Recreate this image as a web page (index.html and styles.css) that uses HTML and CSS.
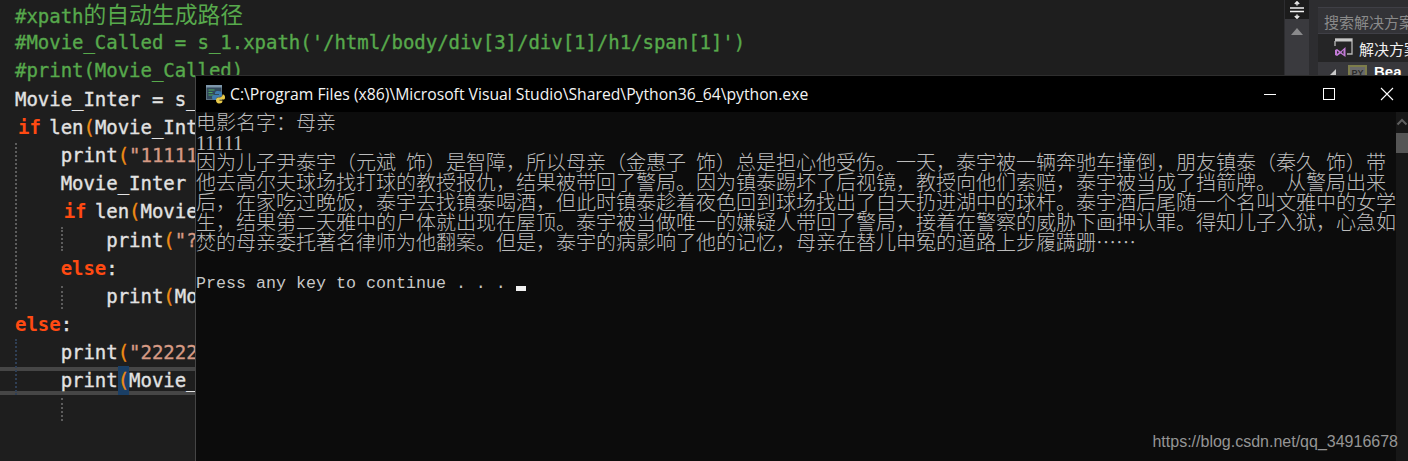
FILE: index.html
```html
<!DOCTYPE html>
<html lang="zh-CN">
<head>
<meta charset="utf-8">
<title>python.exe</title>
<link rel="stylesheet" href="styles.css">
</head>
<body>
<div class="desk">
  <main class="editor">
    <div class="code">
      <div class="ln c">#xpath<span class="zh">的自动生成路径</span></div>
      <div class="ln c">#Movie_Called = s_1.xpath('/html/body/div[3]/div[1]/h1/span[1]')</div>
      <div class="ln c">#print(Movie_Called)</div>
      <div class="ln">Movie_Inter = s_1</div>
      <div class="ln"><span class="k nudge">if</span> len<span class="p">(</span>Movie_Inter</div>
      <div class="ln">    print<span class="p">(</span><span class="s">"11111"</span><span class="p">)</span></div>
      <div class="ln">    Movie_Inter = s_1</div>
      <div class="ln">    <span class="k nudge">if</span> len<span class="p">(</span>Movie_Inter</div>
      <div class="ln">        print<span class="p">(</span><span class="s">"?"</span><span class="p">)</span></div>
      <div class="ln">    <span class="k">else</span>:</div>
      <div class="ln">        print<span class="p">(</span>Movie_Inter</div>
      <div class="ln"><span class="k">else</span>:</div>
      <div class="ln">    print<span class="p">(</span><span class="s">"22222"</span><span class="p">)</span></div>
      <div class="ln">    print<span class="p brace">(</span>Movie_Inter</div>
    </div>
    <div class="curline"></div>
    <i class="guide g1"></i>
    <i class="guide g2"></i>
    <i class="guide g3"></i>
    <i class="guide g4"></i>
    <i class="guide g5"></i>
  </main>

  <aside class="vscroll">
    <div class="splitter">
      <svg width="16" height="18" viewBox="0 0 16 18"><path d="M8 1v3.500M8 13.500V17M5.800 3 8 .8 10.200 3M5.800 15 8 17.200 10.200 15" fill="none" stroke="#e8e8e8" stroke-width="1.500"/><path d="M1 7h14M1 10.500h14" stroke="#f2f2f2" stroke-width="1.600"/></svg>
    </div>
    <svg class="uparrow" width="12" height="7" viewBox="0 0 12 7"><path d="M6 0l6 7H0z" fill="#8a8a8c"/></svg>
  </aside>

  <aside class="explorer">
    <div class="search">搜索解决方案资源管理器</div>
    <div class="row sel">
      <svg class="slnicon" width="20" height="20" viewBox="0 0 20 20"><path d="M1 1h17v15h-5" fill="none" stroke="#b8b8b8" stroke-width="1.300"/><path d="M1 1h17v2.500H1z" fill="#c8c8c8"/><path d="M1 3v5" stroke="#b8b8b8" stroke-width="1.300"/><path d="M11.500 9v10L6.500 15.500 3 18l-2-1v-5l2-1 3.500 2.500z" fill="#c27ad6"/><path d="M3 12.700v3.200l2-1.600zM9.500 12l-2 2.300 2 2.300z" fill="#2d2d30"/></svg>
      <span class="rowtext">解决方案</span>
    </div>
    <div class="row proj">
      <svg class="tri" width="7" height="7" viewBox="0 0 7 7"><path d="M7 0v7H0z" fill="#c8c8c8"/></svg>
      <div class="py">PY</div>
      <span class="bold">Bea</span>
    </div>
  </aside>

  <section class="console">
    <header class="titlebar">
      <svg class="appicon" width="19" height="19" viewBox="0 0 19 19"><rect x="0.500" y="0.500" width="15" height="14" fill="#33495c" stroke="#5b7080"/><path d="M0 0h16v2.500H0z" fill="#7d97ab"/><path d="M2.500 5h6M2.500 7.500h4M2.500 10h5" stroke="#4fae5f" stroke-width="1.200"/><path d="M12 6c-3 0-3 1.500-3 3h4v1H8c-1.500 0-2 1-2 2.500S7 15 8.500 15H10c0-2 1-3 3-3s3-1 3-3-1-3-4-3z" fill="#3f7cb0"/><path d="M13 18.500c3 0 3.500-1 3.500-3h-3v-1H18c1-.5 1-1.500 1-2.500s-.5-2.500-2-2.500h-.5c0 2-1 3-3 3S10 13 10 15s1 3.500 3 3.500z" fill="#e8c94a"/></svg>
      <span class="title">C:\Program Files (x86)\Microsoft Visual Studio\Shared\Python36_64\python.exe</span>
      <div class="winbtns">
        <svg width="14" height="14" viewBox="0 0 14 14"><path d="M1 7.500h12" stroke="#fff"/></svg>
        <svg width="14" height="14" viewBox="0 0 14 14"><rect x="1.500" y="1.500" width="11" height="11" fill="none" stroke="#fff"/></svg>
        <svg width="14" height="14" viewBox="0 0 14 14"><path d="M1 1l12 12M13 1L1 13" stroke="#fff" stroke-width="1.100"/></svg>
      </div>
    </header>
    <div class="conbody">
      <div class="output">
        <div class="out">电影名字：母亲</div>
        <div class="out num">11111</div>
        <div class="out">因为儿子尹泰宇（元斌<span class="lat"> </span>饰）是智障，所以母亲（金惠子<span class="lat"> </span>饰）总是担心他受伤。一天，泰宇被一辆奔驰车撞倒，朋友镇泰（秦久<span class="lat"> </span>饰）带</div>
        <div class="out">他去高尔夫球场找打球的教授报仇，结果被带回了警局。因为镇泰踢坏了后视镜，教授向他们索赔，泰宇被当成了挡箭牌。<span class="lat"> </span>从警局出来</div>
        <div class="out">后，在家吃过晚饭，泰宇去找镇泰喝酒，但此时镇泰趁着夜色回到球场找出了白天扔进湖中的球杆。泰宇酒后尾随一个名叫文雅中的女学</div>
        <div class="out">生，结果第二天雅中的尸体就出现在屋顶。泰宇被当做唯一的嫌疑人带回了警局，接着在警察的威胁下画押认罪。得知儿子入狱，心急如</div>
        <div class="out">焚的母亲委托著名律师为他翻案。但是，泰宇的病影响了他的记忆，母亲在替儿申冤的道路上步履蹒跚……</div>
        <div class="out">&nbsp;</div>
        <div class="out press"><span class="lat">Press any key to continue . . . </span><i class="cursor"></i></div>
      </div>
      <div class="conscroll">
        <svg width="12" height="8" viewBox="0 0 12 8"><path d="M1.500 6.500 6 2l4.500 4.500" fill="none" stroke="#5f5f5f" stroke-width="2"/></svg>
        <div class="thumb"></div>
      </div>
    </div>
    <div class="watermark">https://blog.csdn.net/qq_34916678</div>
  </section>
</div>
</body>
</html>
```

FILE: styles.css
```css
* { box-sizing: border-box; }
html, body { margin: 0; padding: 0; height: 100%; overflow: hidden; background: #1e1e1e; }

.desk { position: relative; display: flex; width: 1408px; height: 461px; overflow: hidden; }

/* editor */
.editor { position: relative; flex: 1 1 auto; min-width: 0; background: #1e1e1e; overflow: hidden; }
.code { position: relative; z-index: 1; padding-left: 15px; font-family: "DejaVu Sans Mono", monospace; font-size: 19px; font-weight: 400; letter-spacing: -0.03px; color: #e2e2e2; -webkit-text-stroke: 0.35px currentColor; }
.ln { height: 28.2px; line-height: 28.2px; white-space: pre; }
.c { color: #57a94c; }
.zh { font-family: "Noto Sans CJK SC", sans-serif; font-size: 22.800px; font-weight: 400; letter-spacing: 0; -webkit-text-stroke: 0; }
.k { color: #ff4a12; font-weight: 700; -webkit-text-stroke: 0; }
.p { color: #f08c14; }
.s { color: #d69a84; }
.nudge { margin-left: 3px; margin-right: -3px; }
.brace { display: inline-block; height: 28.200px; background: #1a3f66; }
.curline { position: absolute; left: 0; right: 0; top: 367px; height: 28px; border-top: 4px solid #464646; border-bottom: 4px solid #464646; }
.guide { position: absolute; width: 2px; border-left: 2px dotted #5c5c5c; z-index: 2; }
.g1 { left: 15px; top: 143px; height: 166px; }
.g2 { left: 61px; top: 227px; height: 24px; }
.g3 { left: 61px; top: 286px; height: 23px; }
.g4 { left: 15px; top: 339px; height: 56px; border-left-color: #2f3f55; }
.g5 { left: 61px; top: 398px; height: 23px; }

/* editor scrollbar */
.vscroll { flex: 0 0 25px; display: flex; flex-direction: column; align-items: center; background: #3a3a3e; border-left: 1px solid #2d2d30; }
.splitter { display: flex; align-items: center; justify-content: center; width: 100%; height: 19px; background: #1c1c1c; }
.uparrow { margin-top: 9px; }

/* solution explorer */
.explorer { flex: 0 0 99px; padding-left: 9px; background: #2d2d30; overflow: hidden; white-space: nowrap; }
.search { height: 27px; margin-top: 7px; padding-left: 6px; line-height: 27px; background: #333337; border-top: 1px solid #3f3f46; border-bottom: 1px solid #3f3f46; font-family: "Noto Sans CJK SC", sans-serif; font-size: 15px; color: #8a8a8a; overflow: hidden; }
.row { display: flex; align-items: center; overflow: hidden; }
.sel { height: 28px; background: #252526; padding-left: 16px; }
.slnicon { flex: none; }
.rowtext { margin-left: 5px; font-family: "Noto Sans CJK SC", sans-serif; font-size: 15px; color: #f0f0f0; }
.proj { height: 14px; background: #38383c; align-items: flex-start; padding-left: 11px; }
.tri { flex: none; margin-top: 7px; }
.py { flex: none; width: 19px; height: 16px; margin: 3px 0 0 12px; border: 2px solid #7d7d4a; background: #6a6a6a; font: 700 9px/12px "Liberation Sans", sans-serif; color: #2a2a2a; text-align: center; }
.bold { margin-left: 7px; font: 700 15px/20px "Liberation Sans", sans-serif; color: #fff; }

/* console window */
.console { position: absolute; left: 195px; top: 75px; width: 1213px; height: 386px; display: flex; flex-direction: column; background: #0c0c0c; border-left: 1px solid #454545; border-top: 1px solid #2e2e2e; z-index: 5; }
.titlebar { flex: 0 0 36px; display: flex; align-items: center; background: #000; color: #fff; padding-left: 10px; }
.appicon { flex: none; }
.title { margin-left: 5px; font-family: "Open Sans", sans-serif; font-size: 15.730px; white-space: nowrap; color: #f4f4f4; }
.winbtns { display: flex; align-items: center; gap: 44.500px; margin-left: auto; padding-right: 14px; }
.conbody { flex: 1 1 auto; display: flex; min-height: 0; }
.output { flex: 1 1 auto; min-width: 0; font-family: "Noto Sans CJK SC", sans-serif; font-size: 20px; font-weight: 300; color: #bcbcbc; }
.out { height: 20px; line-height: 20px; white-space: pre; }
.num { font-family: "Liberation Serif", serif; padding-top: 1px; }
.lat { font-family: "Liberation Mono", monospace; font-size: 16.667px; }
.press { display: flex; align-items: center; padding-top: 4px; white-space: pre; color: #c8c8c8; }
.cursor { display: block; width: 10px; height: 5px; margin-top: 8px; background: #f0f0f0; }
.conscroll { flex: 0 0 12px; display: flex; flex-direction: column; background: #171717; padding-top: 6px; }
.thumb { height: 20px; margin-top: 7px; background: #555; }
.watermark { position: absolute; right: 10px; bottom: 9px; font: 16px/20px "Liberation Sans", sans-serif; color: #959595; }
```
